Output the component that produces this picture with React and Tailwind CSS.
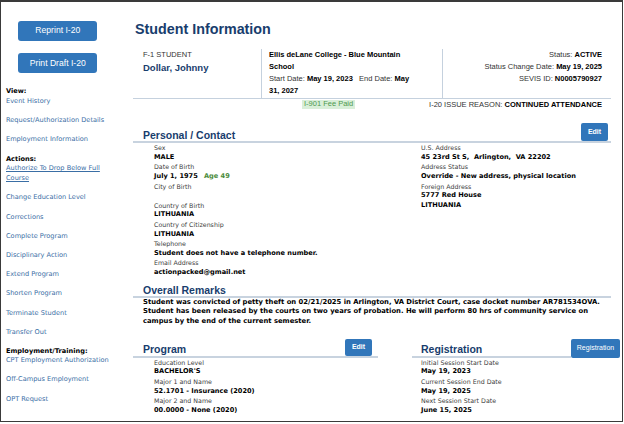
const Link = ({ children, className = "" }) => (
  <a className={`block leading-[9.6px] mb-[9.65px] text-[#3a6ea5] ${className}`}>{children}</a>
);

const Head = ({ children, className = "" }) => (
  <div className={`font-bold text-black leading-[10px] ${className}`}>{children}</div>
);

function Sidebar() {
  return (
    <div className="w-[132px] shrink-0 pl-[5px] pt-[18.7px] text-[6.6px]">
      <button className="block ml-[12.3px] w-[79px] h-[20px] rounded-[3px] bg-[#3176ba] text-white text-[8.6px] font-['Liberation_Sans',Arial,sans-serif]">
        Reprint I-20
      </button>
      <button className="block mt-[12.6px] ml-[12.3px] w-[79px] h-[20px] rounded-[3px] bg-[#3176ba] text-white text-[8.6px] font-['Liberation_Sans',Arial,sans-serif]">
        Print Draft I-20
      </button>
      <Head className="mt-[12.5px]">View:</Head>
      <div className="mt-[1px]">
        <Link>Event History</Link>
        <Link>Request/Authorization Details</Link>
        <Link>Employment Information</Link>
      </div>
      <Head className="mt-[1px]">Actions:</Head>
      <Link className="underline text-[#2c4f80]">
        Authorize To Drop Below Full
        <br />
        Course
      </Link>
      <Link>Change Education Level</Link>
      <Link>Corrections</Link>
      <Link>Complete Program</Link>
      <Link>Disciplinary Action</Link>
      <Link>Extend Program</Link>
      <Link>Shorten Program</Link>
      <Link>Terminate Student</Link>
      <Link>Transfer Out</Link>
      <Head className="-mt-[1px]">Employment/Training:</Head>
      <Link>CPT Employment Authorization</Link>
      <Link>Off-Campus Employment</Link>
      <Link>OPT Request</Link>
    </div>
  );
}

const Label = ({ children }) => (
  <div className="text-[6.3px] text-[#3c3c3c] whitespace-nowrap">{children || "\u00a0"}</div>
);
const Value = ({ children }) => (
  <div className="text-[6.6px] font-bold text-black whitespace-nowrap">{children || "\u00a0"}</div>
);

const Btn = ({ children, className = "" }) => (
  <button className={`rounded-[2px] bg-[#3176ba] text-white text-[7px] font-bold font-['Liberation_Sans',Arial,sans-serif] ${className}`}>
    {children}
  </button>
);

const H2 = ({ children, className = "" }) => (
  <div className={`text-[10.5px] leading-[12px] font-bold text-[#183d6d] font-['Liberation_Sans',Arial,sans-serif] ${className}`}>
    {children}
  </div>
);

function Main() {
  return (
    <div className="flex-1 min-w-0 pt-[18.5px]">
      <h1 className="ml-[2px] text-[14.3px] leading-[16px] font-bold text-[#183d6d] font-['Liberation_Sans',Arial,sans-serif]">
        Student Information
      </h1>

      {/* header box */}
      <div className="mt-[12px] w-[478px] h-[50px] border-b border-[#c5d1de] flex text-[7.5px] leading-[12px] font-['Liberation_Sans',Arial,sans-serif]">
        <div className="w-[129px] border-r border-[#c5d1de] pl-[10px]">
          <div className="text-[#333]">F-1 STUDENT</div>
          <div className="text-[9.5px] leading-[13px] font-bold text-[#183d6d]">Dollar, Johnny</div>
        </div>
        <div className="w-[181px] border-r border-[#c5d1de] pl-[7px] whitespace-nowrap text-[#333]">
          <div className="font-bold text-black">Ellis deLane College - Blue Mountain</div>
          <div className="font-bold text-black">School</div>
          <div>
            Start Date: <b className="text-black">May 19, 2023</b>&nbsp;&nbsp; End Date: <b className="text-black">May</b>
          </div>
          <div className="font-bold text-black">31, 2027</div>
        </div>
        <div className="flex-1 text-right pr-[9px] whitespace-nowrap text-[#333]">
          <div>
            Status: <b className="text-black">ACTIVE</b>
          </div>
          <div>
            Status Change Date: <b className="text-black">May 19, 2025</b>
          </div>
          <div>
            SEVIS ID: <b className="text-black">N0005790927</b>
          </div>
        </div>
      </div>

      <div className="w-[478px] h-[12px] flex items-center text-[7.5px] font-['Liberation_Sans',Arial,sans-serif] whitespace-nowrap">
        <span className="ml-[169px] px-[2px] leading-[8.5px] bg-[#d9efd9] text-[#4f9a4f]">I-901 Fee Paid</span>
        <span className="ml-auto mr-[9px] text-[#333]">
          I-20 ISSUE REASON: <b className="text-black">CONTINUED ATTENDANCE</b>
        </span>
      </div>

      {/* Personal / Contact */}
      <div className="mt-[12.8px] w-[478px] flex items-end border-b-2 border-[#c8d3df]">
        <H2 className="ml-[10px] mb-[0.6px] flex-1">Personal / Contact</H2>
        <Btn className="w-[27px] h-[18px] mr-[3px]">Edit</Btn>
      </div>
      <div className="flex leading-[9.6px]">
        <div className="w-[288px] pl-[21px]">
          <Label>Sex</Label>
          <Value>MALE</Value>
          <Label>Date of Birth</Label>
          <div className="flex whitespace-nowrap text-[6.6px]">
            <span className="w-[50px] font-bold text-black">July 1, 1975</span>
            <span className="font-bold text-[#4b8b3b]">Age 49</span>
          </div>
          <Label>City of Birth</Label>
          <Value></Value>
          <Label>Country of Birth</Label>
          <Value>LITHUANIA</Value>
          <Label>Country of Citizenship</Label>
          <Value>LITHUANIA</Value>
          <Label>Telephone</Label>
          <Value>Student does not have a telephone number.</Value>
          <Label>Email Address</Label>
          <Value>actionpacked@gmail.net</Value>
        </div>
        <div className="flex-1">
          <Label>U.S. Address</Label>
          <Value>45 23rd St S,&nbsp; Arlington,&nbsp; VA 22202</Value>
          <Label>Address Status</Label>
          <Value>Override - New address, physical location</Value>
          <Label>Foreign Address</Label>
          <Value>5777 Red House</Value>
          <Value>LITHUANIA</Value>
        </div>
      </div>

      {/* Overall Remarks */}
      <div className="mt-[6px] w-[478px] border-b-2 border-[#c8d3df]">
        <H2 className="ml-[10px]">Overall Remarks</H2>
      </div>
      <div className="pl-[10px] text-[6.8px] leading-[9.8px] font-bold text-black whitespace-nowrap">
        Student was convicted of petty theft on 02/21/2025 in Arlington, VA District Court, case docket number AR781534OVA.
        <br />
        Student has been released by the courts on two years of probation. He will perform 80 hrs of community service on
        <br />
        campus by the end of the current semester.
      </div>

      {/* Program / Registration */}
      <div className="mt-[11.9px] flex">
        <div className="w-[279px]">
          <div className="w-[245px] flex items-end border-b-2 border-[#c8d3df]">
            <H2 className="ml-[10px] mb-[1px] flex-1">Program</H2>
            <Btn className="w-[27px] h-[17px] mr-[6px]">Edit</Btn>
          </div>
          <div className="pl-[21px] leading-[9.6px]">
            <Label>Education Level</Label>
            <Value>BACHELOR'S</Value>
            <Label>Major 1 and Name</Label>
            <Value>52.1701 - Insurance (2020)</Value>
            <Label>Major 2 and Name</Label>
            <Value>00.0000 - None (2020)</Value>
          </div>
        </div>
        <div className="w-[208px]">
          <div className="flex items-end">
            <div className="flex-1 border-b-2 border-[#c8d3df]">
              <H2 className="ml-[9px] mb-[1px]">Registration</H2>
            </div>
            <Btn className="w-[49px] h-[19px] font-normal text-[7.5px]">Registration</Btn>
          </div>
          <div className="pl-[9px] leading-[9.6px]">
            <Label>Initial Session Start Date</Label>
            <Value>May 19, 2023</Value>
            <Label>Current Session End Date</Label>
            <Value>May 19, 2025</Value>
            <Label>Next Session Start Date</Label>
            <Value>June 15, 2025</Value>
          </div>
        </div>
      </div>
    </div>
  );
}

export default function App() {
  return (
    <div className="w-[624px] h-[424px] bg-white overflow-hidden">
      <div className="w-[623px] h-[422px] border border-t-2 border-[#3a3a3a] overflow-hidden flex font-['DejaVu_Sans',Verdana,sans-serif]">
        <Sidebar />
        <Main />
      </div>
    </div>
  );
}
